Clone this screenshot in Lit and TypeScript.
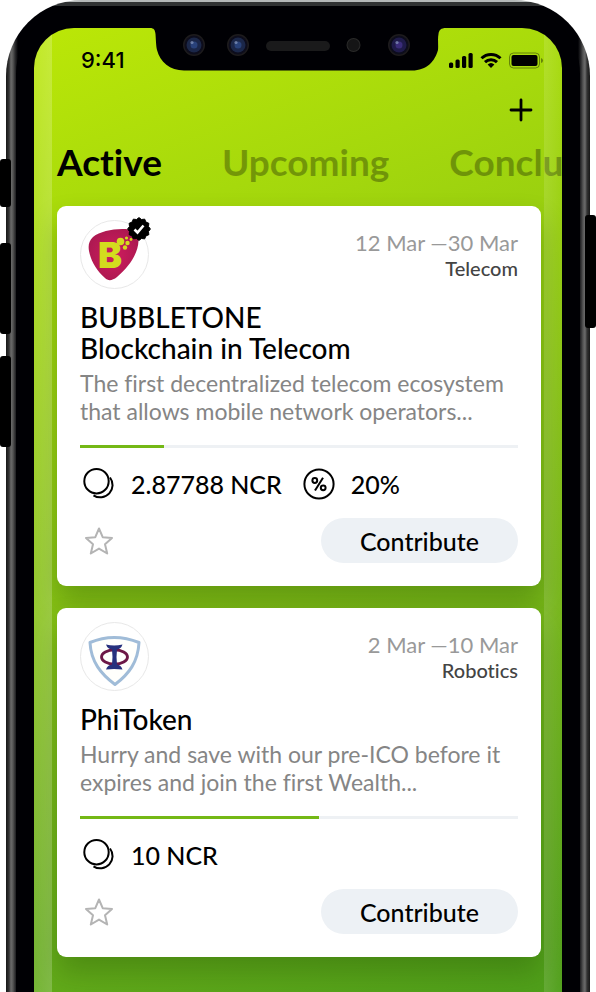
import { LitElement, html, svg, css, nothing } from "lit";
import { customElement, property, state } from "lit/decorators.js";
import { classMap } from "lit/directives/class-map.js";

interface Project {
  id: string;
  logo: "bubbletone" | "phitoken";
  verified: boolean;
  dates: string;
  category: string;
  title: string[];
  description: string[];
  progress: number;
  amount: string;
  bonus?: string;
}

const projects: Project[] = [
  {
    id: "bubbletone",
    logo: "bubbletone",
    verified: true,
    dates: "12 Mar —30 Mar",
    category: "Telecom",
    title: ["BUBBLETONE", "Blockchain in Telecom"],
    description: ["The first decentralized telecom ecosystem", "that allows mobile network operators..."],
    progress: 19.2,
    amount: "2.87788 NCR",
    bonus: "20%",
  },
  {
    id: "phitoken",
    logo: "phitoken",
    verified: false,
    dates: "2 Mar —10 Mar",
    category: "Robotics",
    title: ["PhiToken"],
    description: ["Hurry and save with our pre-ICO before it", "expires and join the first Wealth..."],
    progress: 54.6,
    amount: "10 NCR",
  },
];

const sealPoints = Array.from({ length: 24 }, (_, i) => {
  const r = i % 2 ? 9.8 : 11.4;
  const a = (i * Math.PI) / 12;
  return `${(12 + r * Math.sin(a)).toFixed(2)},${(12 - r * Math.cos(a)).toFixed(2)}`;
}).join(" ");

const logos = {
  bubbletone: html`<svg class="logo" viewBox="1 1 67 67" role="img" aria-label="Bubbletone logo">
    <defs>
      <radialGradient id="berry" cx="50%" cy="50%" r="60%">
        <stop offset="0" stop-color="#d01c5e" />
        <stop offset="1" stop-color="#a8184f" />
      </radialGradient>
    </defs>
    <path fill="url(#berry)" d="M9 31C8 25 9 21 13 17C21 11 36 8 49 9.500C56 10.500 59 14 58.500 21C58 33 50 46 37 57C32 61 28 61 25 58C16 50 11 41 9 31Z" />
    <text x="18" y="48" class="mark">B</text>
    <g fill="#d3dc1e">
      <circle cx="40.500" cy="21.500" r="3.800" />
      <circle cx="45" cy="27.500" r="2.200" />
      <circle cx="47.500" cy="23" r="2.200" />
      <circle cx="46.500" cy="18" r="1.600" />
      <circle cx="51" cy="19.500" r="1.400" />
    </g>
  </svg>`,
  phitoken: html`<svg class="logo" viewBox="1 1 67 67" role="img" aria-label="PhiToken logo">
    <path fill="#fffffc" stroke="#a0bcd8" stroke-width="3" stroke-linejoin="round" d="M10 20.500Q34 10.500 59 20.500C58 40 49 52 35 62.500C21 52 11 40 10 20.500Z" />
    <ellipse cx="34.500" cy="35" rx="13" ry="7.200" fill="none" stroke="#6c1746" stroke-width="2.800" />
    <path fill="#27317e" d="M26 22.500Q34 24.500 42.500 22.500Q41 27 37 27.500Q36 35 37 42.500Q41 43 42.500 47.500Q34 46.500 26 47.500Q27.500 43 32 42.500Q33 35 32 27.500Q27.500 27 26 22.500Z" />
  </svg>`,
};

@customElement("project-card")
export class ProjectCard extends LitElement {
  @property({ attribute: false }) project!: Project;
  @state() private starred = false;

  static styles = css`
    :host {
      display: block;
      padding: 14px 23px 23px;
      background: #fff;
      border-radius: 9px;
      box-shadow: 0 16px 28px rgba(20, 60, 0, 0.28);
    }
    .head {
      display: flex;
      justify-content: space-between;
      margin-bottom: 13px;
    }
    .avatar {
      position: relative;
      width: 67px;
      height: 67px;
      border: 1px solid #e8e8e8;
      border-radius: 50%;
    }
    .logo {
      display: block;
      width: 67px;
      height: 67px;
    }
    .mark {
      font: 900 36px Inter, sans-serif;
      fill: #d3dc1e;
    }
    .seal {
      position: absolute;
      top: -4px;
      right: -3px;
      width: 24px;
      height: 24px;
    }
    .meta {
      padding-top: 9px;
      text-align: right;
    }
    .dates {
      font-size: 22px;
      line-height: 28px;
      color: #999;
    }
    .category {
      font-size: 20px;
      line-height: 22px;
      color: #444;
      font-weight: 500;
    }
    h2 {
      margin: 0 0 5px;
      font-size: 28px;
      line-height: 31px;
      font-weight: 500;
      color: #000;
    }
    h2 span,
    p span {
      display: block;
      white-space: nowrap;
    }
    p {
      margin: 0 0 20px;
      font-size: 23px;
      line-height: 28px;
      color: #858585;
    }
    .track {
      height: 3px;
      background: #eef1f4;
    }
    .fill {
      height: 3px;
      background: #74b816;
    }
    .stats {
      display: flex;
      align-items: center;
      height: 36px;
      margin: 18px 0 16px;
      padding-left: 3px;
      font-size: 25px;
      font-weight: 500;
      color: #000;
    }
    .stats span {
      margin: 0 21px 0 16px;
    }
    .icon {
      width: 32px;
      height: 32px;
      fill: none;
      stroke: #000;
      stroke-width: 2;
    }
    .actions {
      display: flex;
      align-items: center;
      justify-content: space-between;
    }
    button {
      border: 0;
      padding: 0;
      font: inherit;
      color: #000;
      cursor: pointer;
    }
    .star {
      display: flex;
      margin-left: 3px;
      background: none;
    }
    .star svg {
      width: 32px;
      height: 32px;
      fill: none;
      stroke: #b4b4b4;
      stroke-width: 2;
      stroke-linejoin: round;
    }
    .star.on svg {
      fill: #b4b4b4;
    }
    .contribute {
      width: 45%;
      height: 45px;
      border-radius: 23px;
      background: #edf1f5;
      font-size: 25px;
      font-weight: 500;
    }
  `;

  render() {
    const p = this.project;
    return html`
      <div class="head">
        <div class="avatar">
          ${logos[p.logo]}
          ${p.verified
            ? html`<svg class="seal" viewBox="0 0 24 24" role="img" aria-label="Verified">
                <polygon points=${sealPoints} stroke="#000" stroke-width="1" stroke-linejoin="round" />
                <path d="M7.500 12.500L10.500 15.500L16.500 8.500" fill="none" stroke="#fff" stroke-width="2.600" />
              </svg>`
            : nothing}
        </div>
        <div class="meta">
          <div class="dates">${p.dates}</div>
          <div class="category">${p.category}</div>
        </div>
      </div>
      <h2>${p.title.map((t) => html`<span>${t}</span>`)}</h2>
      <p>${p.description.map((t) => html`<span>${t}</span>`)}</p>
      <div class="track" role="progressbar" aria-label="Funding" aria-valuenow=${p.progress}>
        <div class="fill" style="width:${p.progress}%"></div>
      </div>
      <div class="stats">
        <svg class="icon" viewBox="0 0 32 32" aria-hidden="true">
          <circle cx="13.500" cy="13.200" r="12.200" />
          <path d="M27 9.500A12.300 12.300 0 0 1 10.500 27.300" />
        </svg>
        <span>${p.amount}</span>
        ${p.bonus
          ? html`<svg class="icon" viewBox="0 0 32 32" aria-hidden="true">
                <circle cx="16" cy="16" r="14.600" />
                <circle cx="11.800" cy="12.500" r="2.400" />
                <circle cx="20.200" cy="19.800" r="2.400" />
                <path d="M20 9.800L12 22.500" />
              </svg>
              <span>${p.bonus}</span>`
          : nothing}
      </div>
      <div class="actions">
        <button
          class=${classMap({ star: true, on: this.starred })}
          aria-label="Favourite"
          aria-pressed=${this.starred}
          @click=${() => (this.starred = !this.starred)}
        >
          <svg viewBox="0 0 32 32">
            <path d="M16 3.500L19.700 12.200L29 13L22 19.300L24.200 28.500L16 23.600L7.800 28.500L10 19.300L3 13L12.300 12.200Z" />
          </svg>
        </button>
        <button class="contribute">Contribute</button>
      </div>
    `;
  }
}

const camera = (cx: number, iris: string, core: string) => svg`
  <circle cx=${cx} cy="45" r="11" fill="#1d1b1d" />
  <circle cx=${cx} cy="45" r="9.500" fill="#0d0d1c" />
  <circle cx=${cx} cy="45" r="7.500" fill=${iris} />
  <circle cx=${cx} cy="45" r="3.500" fill=${core} />
  <circle cx=${cx - 2} cy="42.500" r="1.600" fill="#8f9fc4" opacity="0.65" />`;

@customElement("app-root")
export class AppRoot extends LitElement {
  @state() private active = "Active";

  static styles = css`
    :host {
      display: block;
      box-sizing: border-box;
      height: 100vh;
      overflow: hidden;
      background: #fff;
      font-family: Lato, sans-serif;
      font-variant-ligatures: none;
    }
    .phone {
      position: relative;
      box-sizing: border-box;
      height: 100%;
      margin: 0 6px;
      padding: 28px 28px 0;
      border-radius: 76px 76px 0 0;
      background: linear-gradient(#b4b8b8, #b4b8b8) 0 0 / 100% 2px no-repeat,
        linear-gradient(#303233, #303233) 0 2px / 100% 4px no-repeat,
        linear-gradient(90deg, #171717 0, #333 3px, #6b6b6b 5px, #555 7px, #2d2d2f 9px, #000004 12px, #000004 calc(100% - 12px), #2d2d2f calc(100% - 9px), #555 calc(100% - 7px), #6b6b6b calc(100% - 5px), #333 calc(100% - 3px), #171717 100%);
    }
    .bezel {
      position: absolute;
      inset: 6px 10px 0;
      border-radius: 68px 68px 0 0;
      background: #000004;
    }
    .key {
      position: absolute;
      background: #000;
      width: 11px;
      border-radius: 3px;
    }
    .left {
      left: -6px;
    }
    .right {
      right: -6px;
      top: 215px;
      height: 113px;
    }
    .mute {
      top: 159px;
      height: 48px;
    }
    .up {
      top: 243px;
      height: 91px;
    }
    .down {
      top: 356px;
      height: 91px;
    }
    .screen {
      position: relative;
      box-sizing: border-box;
      height: 100%;
      padding: 0 21px 0 23px;
      overflow: hidden;
      border-radius: 40px 40px 0 0;
      background: linear-gradient(160deg, #bbe707 0%, #a6d90c 20%, #7bb918 62%, #4f9f1a 100%);
    }
    .screen::before,
    .screen::after {
      content: "";
      position: absolute;
      top: 0;
      bottom: 0;
      width: 18px;
    }
    .screen::before {
      left: 0;
      border-radius: 40px 0 0 0;
      background: linear-gradient(90deg, rgba(255, 255, 255, 0.12), rgba(255, 255, 255, 0.2));
    }
    .screen::after {
      right: 0;
      background: linear-gradient(90deg, rgba(255, 255, 255, 0.12), rgba(255, 255, 255, 0.02));
    }
    .notch {
      position: absolute;
      top: 27px;
      left: 50%;
      margin-left: -148px;
      width: 296px;
      height: 45px;
    }
    .status {
      display: flex;
      align-items: center;
      justify-content: space-between;
      height: 64px;
      padding-left: 24px;
      font: 500 22px Inter, sans-serif;
    }
    .status svg {
      width: 93px;
      height: 20px;
      overflow: visible;
    }
    .tools {
      display: flex;
      justify-content: flex-end;
      padding-right: 8px;
    }
    button {
      padding: 0;
      border: 0;
      background: none;
      font: inherit;
      color: #000;
      cursor: pointer;
    }
    .add {
      display: flex;
    }
    .add svg {
      width: 24px;
      height: 36px;
    }
    .tabs {
      display: flex;
      gap: 60px;
      height: 44px;
      margin: 12px 0 22px;
      font-size: 37px;
      font-weight: 700;
      line-height: 44px;
    }
    .tab {
      opacity: 0.3;
    }
    .tab.on {
      opacity: 1;
    }
    .cards {
      display: grid;
      gap: 22px;
    }
  `;

  render() {
    return html`
      <div class="phone">
        <i class="key left mute"></i><i class="key left up"></i><i class="key left down"></i>
        <i class="key right"></i>
        <div class="bezel"></div>
        <main class="screen">
          <div class="status">
            <span>9:41</span>
            <svg viewBox="0 0 93 20" role="img" aria-label="Signal, Wi-Fi and battery">
              <rect x="1" y="12.500" width="4.200" height="5.500" rx="1.500" />
              <rect x="7.500" y="9.500" width="4.200" height="8.500" rx="1.500" />
              <rect x="14" y="6" width="4.200" height="12" rx="1.500" />
              <rect x="20.500" y="3" width="4.200" height="15" rx="1.500" />
              <g fill="none" stroke="#000" stroke-width="3">
                <path d="M33.500 8.300A13.600 13.600 0 0 1 52.500 8.300" />
                <path d="M37 12.200A8.700 8.700 0 0 1 49 12.200" />
              </g>
              <path d="M43 18L39.600 14.600A5 5 0 0 1 46.400 14.600Z" />
              <rect x="61.500" y="3" width="30" height="15" rx="4" fill="none" stroke="#000" stroke-opacity="0.4" />
              <rect x="63.500" y="5" width="26" height="11" rx="2" />
              <path d="M93 8Q95 8.500 95 10.500T93 13Z" fill-opacity="0.4" />
            </svg>
          </div>
          <div class="tools">
            <button class="add" aria-label="Add project">
              <svg viewBox="0 0 24 36">
                <path d="M12 8V28M2 18H22" stroke="#000" stroke-width="2.800" stroke-linecap="round" />
              </svg>
            </button>
          </div>
          <nav class="tabs">
            ${["Active", "Upcoming", "Concluded"].map(
              (t) => html`<button class=${classMap({ tab: true, on: t === this.active })} @click=${() => (this.active = t)}>${t}</button>`
            )}
          </nav>
          <section class="cards">
            ${projects.map((p) => html`<project-card .project=${p}></project-card>`)}
          </section>
        </main>
        <svg class="notch" viewBox="150 27 296 45" aria-hidden="true">
          <path fill="#000004" d="M150 27V28C154 28 155 30 155.500 34C156 41 156 45 157 50C160 62 170 70.500 184 70.500H412C427 70.500 435 61 438 50C438.500 45 437.500 39 438.500 34C439 30 441 28 446 28V27Z" />
          ${camera(194, "#1b2749", "#29427a")} ${camera(238, "#1b2749", "#29427a")}
          <rect x="266" y="41" width="64" height="10" rx="5" fill="#1a1a1b" />
          <circle cx="353.500" cy="45" r="7" fill="#2a2a2a" />
          <circle cx="353.500" cy="45" r="6" fill="#151516" />
          ${camera(399, "#1f1b4a", "#3a2c7a")}
        </svg>
      </div>
    `;
  }
}
